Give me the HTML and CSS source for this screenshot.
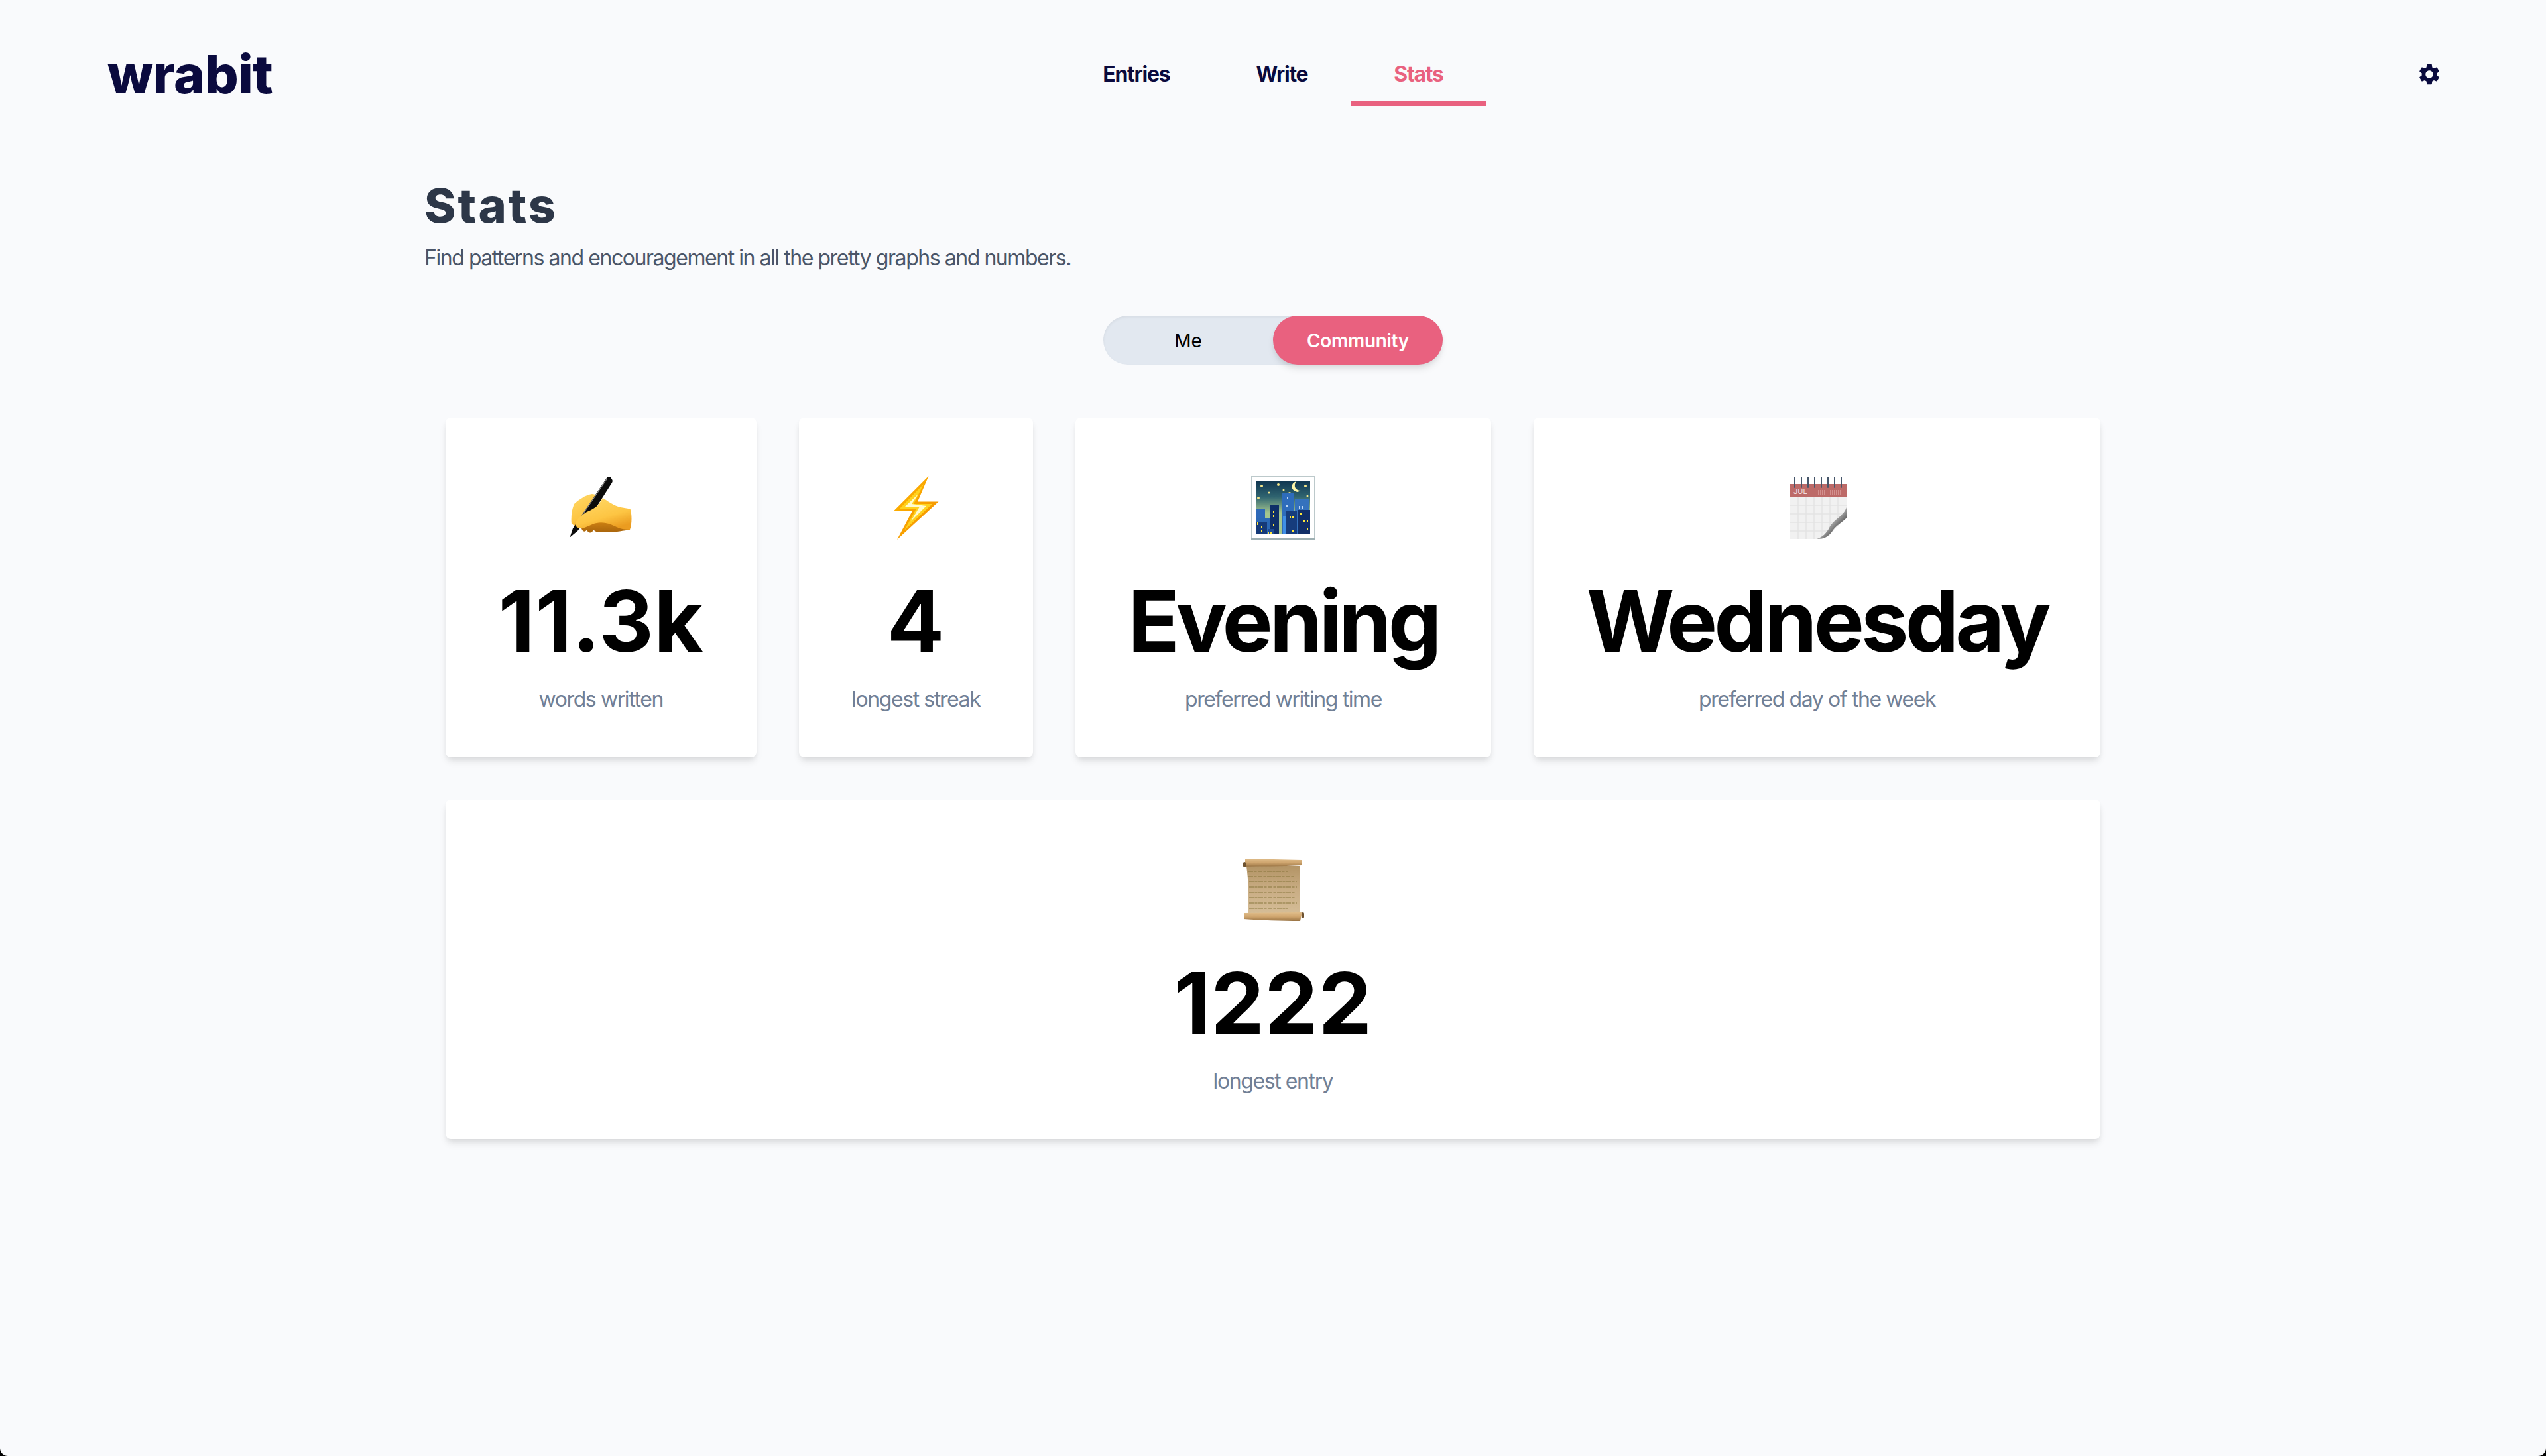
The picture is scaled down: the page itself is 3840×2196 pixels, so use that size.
FILE: index.html
```html
<!DOCTYPE html>
<html lang="en">
<head>
    <meta charset="UTF-8">
    <meta name="viewport" content="width=device-width, initial-scale=1.0">
    <title>Stats - wrabit</title>
    <link rel="stylesheet" href="styles.css">
</head>
<body>
    <div class="header">
        <a class="logo">wrabit</a>
        <div class="tabs">
            <a class="tab">Entries</a>
            <a class="tab">Write</a>
            <a class="tab tab-active">Stats</a>
        </div>
        <svg class="gear" viewBox="0 0 24 24">
            <path d="M19.14,12.94c0.04-0.3,0.06-0.61,0.06-0.94c0-0.32-0.02-0.64-0.07-0.94l2.03-1.58c0.18-0.14,0.23-0.41,0.12-0.61l-1.92-3.32c-0.12-0.22-0.37-0.29-0.59-0.22l-2.39,0.96c-0.5-0.38-1.03-0.7-1.62-0.94L14.4,2.81c-0.04-0.24-0.24-0.41-0.48-0.41h-3.84c-0.24,0-0.43,0.17-0.47,0.41L9.25,5.35C8.66,5.59,8.12,5.92,7.63,6.29L5.24,5.33c-0.22-0.08-0.47,0-0.59,0.22L2.74,8.87C2.62,9.08,2.66,9.34,2.86,9.48l2.03,1.58C4.84,11.36,4.8,11.69,4.8,12s0.02,0.64,0.07,0.94l-2.03,1.58c-0.18,0.14-0.23,0.41-0.12,0.61l1.92,3.32c0.12,0.22,0.37,0.29,0.59,0.22l2.39-0.96c0.5,0.38,1.03,0.7,1.62,0.94l0.36,2.54c0.05,0.24,0.24,0.41,0.48,0.41h3.84c0.24,0,0.44-0.17,0.47-0.41l0.36-2.54c0.59-0.24,1.13-0.56,1.62-0.94l2.39,0.96c0.22,0.08,0.47,0,0.59-0.22l1.92-3.32c0.12-0.22,0.07-0.47-0.12-0.61L19.14,12.94z M12,15.6c-1.98,0-3.6-1.62-3.6-3.6s1.62-3.6,3.6-3.6s3.6,1.62,3.6,3.6S13.98,15.6,12,15.6z"/>
        </svg>
    </div>

    <div class="main">
        <h1 class="title">Stats</h1>
        <p class="subtitle">Find patterns and encouragement in all the pretty graphs and numbers.</p>

        <div class="toggle">
            <button class="toggle-btn">Me</button>
            <button class="toggle-btn toggle-active">Community</button>
        </div>

        <div class="cards">
            <!-- words written -->
            <div class="card">
                <svg class="emoji" viewBox="0 0 96 96">
                    <defs>
                        <linearGradient id="skin" x1="0.1" y1="0" x2="0.6" y2="1">
                            <stop offset="0" stop-color="#ffd968"/>
                            <stop offset="0.65" stop-color="#fdc543"/>
                            <stop offset="1" stop-color="#eb9c20"/>
                        </linearGradient>
                        <linearGradient id="under" x1="0" y1="0" x2="0" y2="1">
                            <stop offset="0" stop-color="#d98a14"/>
                            <stop offset="1" stop-color="#a8640c"/>
                        </linearGradient>
                    </defs>
                    <!-- fingers under the palm -->
                    <path d="M18 74 C19 84 24 86 27 81 C29 87 35 87 37 81 C41 86 47 85 51 84 C64 86 80 83 92 81 L88 68 L30 64 Z" fill="url(#under)"/>
                    <!-- back of the hand -->
                    <path d="M8 42 C14 36 26 28 35 27 C38 27 44 30 50 33 L30 62 L10 76 L4 72 C3 64 4 50 8 42 Z" fill="url(#skin)"/>
                    <!-- pen -->
                    <path d="M57 3 C59 1 61 1 63 2 L65 5 C66 7 66 8 65 10 L42 46 L13 83 L1.500 92.500 L6 79 Z" fill="#0b0b0b"/>
                    <path d="M57.500 4 L20 59" stroke="#8f8f8f" stroke-width="1.200"/>
                    <!-- thumb and palm over the pen -->
                    <path d="M10 74 C9 67 19 59 27 54 C36 50 42 47 46 41 L51 33 C58 37 68 45 78 47 L92.500 49.500 C95 56 95.500 72 92 81 C86 81 78 80 72 77 C62 72 52 69 42 71 C34 72 24 80 16 79 C13 78 11 77 10 74 Z" fill="url(#skin)"/>
                </svg>
                <div class="number number-digits">11.3k</div>
                <div class="label">words written</div>
            </div>

            <!-- longest streak -->
            <div class="card">
                <svg class="emoji" viewBox="0 0 96 96">
                    <defs>
                        <linearGradient id="bolt" x1="0" y1="0" x2="1" y2="1">
                            <stop offset="0" stop-color="#ffb800"/>
                            <stop offset="1" stop-color="#f28c00"/>
                        </linearGradient>
                    </defs>
                    <path d="M67.500 0 L15 52.500 L43 52.500 L20 96 L82.500 38.500 L51 38.500 Z" fill="url(#bolt)"/>
                    <path d="M60 12 L24 49 L49 49 L31 82 L73 42 L45 42 Z" fill="#ffd21f"/>
                    <path d="M52 27 L32 46 L54 46 L41 68 L64 45 L42 42 Z" fill="#fffbd0"/>
                </svg>
                <div class="number number-digits">4</div>
                <div class="label">longest streak</div>
            </div>

            <!-- preferred writing time -->
            <div class="card">
                <svg class="emoji" viewBox="0 0 96 96">
                    <defs>
                        <linearGradient id="sky" x1="0" y1="0" x2="0" y2="1">
                            <stop offset="0" stop-color="#0f3550"/>
                            <stop offset="0.3" stop-color="#2f6470"/>
                            <stop offset="0.6" stop-color="#a4c68f"/>
                        </linearGradient>
                    </defs>
                    <rect x="0.500" y="0.500" width="95" height="95" fill="#fff" stroke="#bcc9cb"/>
                    <rect x="0" y="94" width="96" height="2" fill="#9fb0b3"/>
                    <rect x="8" y="7" width="81" height="81" fill="url(#sky)"/>
                    <path d="M68 8 C59 11 59 22 70 24 L75 22 C67 22 63 15 68 8 Z" fill="#fff6a8"/>
                    <g fill="#f3e58a">
                        <circle cx="16" cy="15" r="2"/>
                        <circle cx="41" cy="13" r="2"/>
                        <circle cx="82" cy="15" r="2"/>
                        <circle cx="27" cy="25" r="1.500"/>
                        <circle cx="49" cy="21" r="1.500"/>
                        <circle cx="58" cy="26" r="2"/>
                        <circle cx="85" cy="30" r="1.500"/>
                        <circle cx="11" cy="33" r="2"/>
                    </g>
                    <rect x="8" y="49" width="13" height="39" fill="#2d69b8"/>
                    <rect x="46" y="26" width="18" height="62" fill="#2e6cbb"/>
                    <rect x="66" y="35" width="21" height="53" fill="#3572bd"/>
                    <rect x="8" y="63" width="26" height="25" fill="#2b68b4"/>
                    <rect x="48" y="60" width="4" height="28" fill="#3f8fe6"/>
                    <rect x="8" y="70" width="16" height="18" fill="#153a78"/>
                    <rect x="29" y="43" width="13" height="45" fill="#0f2f68"/>
                    <rect x="53" y="53" width="16" height="35" fill="#163c7c"/>
                    <rect x="70" y="51" width="19" height="37" fill="#122f68"/>
                    <rect x="26" y="80" width="8" height="8" fill="#1d4c96"/>
                    <g fill="#ffe83a">
                        <rect x="9" y="70" width="2" height="4"/>
                        <rect x="15" y="76" width="2" height="3"/>
                        <rect x="15" y="82" width="2" height="3"/>
                        <rect x="33" y="52" width="2" height="3"/>
                        <rect x="33" y="59" width="2" height="3"/>
                        <rect x="33" y="72" width="2" height="3"/>
                        <rect x="25" y="84" width="2" height="3"/>
                        <rect x="29" y="84" width="2" height="3"/>
                        <rect x="58" y="60" width="2" height="4"/>
                        <rect x="62" y="60" width="2" height="4"/>
                        <rect x="62" y="81" width="2" height="4"/>
                        <rect x="74" y="55" width="2" height="3"/>
                        <rect x="79" y="66" width="2" height="3"/>
                        <rect x="84" y="66" width="2" height="3"/>
                        <rect x="84" y="78" width="2" height="3"/>
                    </g>
                    <g fill="#bcd6f5">
                        <rect x="54" y="31" width="2" height="4"/>
                        <rect x="53" y="43" width="2" height="3"/>
                        <rect x="72" y="45" width="2" height="4"/>
                        <rect x="77" y="45" width="2" height="4"/>
                    </g>
                </svg>
                <div class="number">Evening</div>
                <div class="label">preferred writing time</div>
            </div>

            <!-- preferred day -->
            <div class="card">
                <svg class="emoji" viewBox="0 0 96 96">
                    <defs>
                        <linearGradient id="curl" x1="0.2" y1="0.2" x2="0.8" y2="0.8">
                            <stop offset="0" stop-color="#f4f4f4"/>
                            <stop offset="0.5" stop-color="#a8a8a8"/>
                            <stop offset="1" stop-color="#333"/>
                        </linearGradient>
                    </defs>
                    <rect x="7" y="32" width="85" height="63" fill="#f1f1f1"/>
                    <g fill="none" stroke="#e4e4e4" stroke-width="1.500">
                        <path d="M19 32 V95 M31 32 V95 M43 32 V95 M55 32 V95 M67 32 V95 M79 32 V95"/>
                        <path d="M7 44 H92 M7 57 H92 M7 70 H92 M7 83 H92"/>
                    </g>
                    <rect x="7" y="12" width="85" height="20" fill="#bd6a68"/>
                    <text class="cal-month" x="12" y="27">JUL</text>
                    <path d="M50 21 V28 M53 21 V28 M56 21 V28 M59 21 V28 M68 21 V28 M71 21 V28 M74 21 V28 M77 21 V28 M80 21 V28 M83 21 V28" stroke="#da9d9b" stroke-width="1.500"/>
                    <g fill="none" stroke="#46566a" stroke-width="2" stroke-linecap="round">
                        <path d="M14 2 V17 M24 2 V17 M34 2 V17 M44 2 V17 M54 2 V17 M64 2 V17 M74 2 V17 M84 2 V17"/>
                    </g>
                    <path d="M93 63 C84 70 72 82 66 90 C60 94 54 95 47 96 L93 96 Z" fill="#fff"/>
                    <path d="M92 47 C88 60 72 66 66 78 C62 86 56 92 47 95 C58 95 64 92 70 84 C76 74 86 70 92 63 Z" fill="url(#curl)"/>
                </svg>
                <div class="number">Wednesday</div>
                <div class="label">preferred day of the week</div>
            </div>

            <!-- longest entry -->
            <div class="card">
                <svg class="emoji" viewBox="0 0 96 96">
                    <defs>
                        <linearGradient id="paper" x1="0" y1="0" x2="0" y2="1">
                            <stop offset="0" stop-color="#b39465"/>
                            <stop offset="0.5" stop-color="#c9ad84"/>
                            <stop offset="1" stop-color="#d5bd97"/>
                        </linearGradient>
                        <linearGradient id="roller" x1="0" y1="0" x2="0" y2="1">
                            <stop offset="0" stop-color="#e0bd8a"/>
                            <stop offset="0.5" stop-color="#cfa56e"/>
                            <stop offset="1" stop-color="#9a7444"/>
                        </linearGradient>
                    </defs>
                    <path d="M8 12 L89 12 C87 35 89 60 88 84 L10 84 C12 60 11 35 8 12 Z" fill="url(#paper)"/>
                    <g class="scroll-lines" fill="none" stroke="#7d6e30" stroke-width="1.600" stroke-dasharray="7 1.500 4 1.500">
                        <path d="M11 20 H70"/>
                        <path d="M11 28 H80"/>
                        <path d="M12 36 H84"/>
                        <path d="M12 44 H84"/>
                        <path d="M12 52 H82"/>
                        <path d="M12 60 H82"/>
                        <path d="M12 68 H84"/>
                        <path d="M12 76 H70"/>
                    </g>
                    <path d="M6 1 L91 3 L91 11 C60 13 30 12 6 13 Z" fill="url(#roller)"/>
                    <rect x="3" y="6" width="4" height="8" rx="2" fill="#6d5230"/>
                    <path d="M4 83 L92 82 L89 95 C60 95 30 94 4 92 Z" fill="url(#roller)"/>
                    <rect x="91" y="82" width="4" height="9" rx="2" fill="#6d5230"/>
                </svg>
                <div class="number number-digits">1222</div>
                <div class="label">longest entry</div>
            </div>
        </div>
    </div>
</body>
</html>
```

FILE: styles.css
```css
* {
    box-sizing: border-box;
}

html {
    background-color: #000;
}

body {
    font-family: 'Inter', 'Liberation Sans', sans-serif;
    background-color: #f9fafc;
    margin: 0;
    height: 2196px;
    overflow: hidden;
    border-radius: 0 0 12px 12px;
    color: #000;
}

.header {
    display: grid;
    grid-template-columns: 1fr auto 1fr;
    align-items: center;
    height: 224px;
    padding: 0 160px;
}

.logo {
    margin-left: 2px;
    font-size: 80px;
    font-weight: 800;
    color: #0a0a3e;
    line-height: 96px;
    letter-spacing: -0.5px;
}

.tabs {
    display: flex;
}

.tab {
    padding: 0 65px;
    height: 96px;
    line-height: 96px;
    font-size: 32px;
    font-weight: 700;
    letter-spacing: -1.3px;
    color: #0a0a3e;
}

.tab-active {
    color: #e9617f;
    border-bottom: 8px solid #e9617f;
}

.gear {
    justify-self: end;
    width: 38px;
    height: 38px;
    margin-right: -3px;
    fill: #0a0a3e;
}

.main {
    width: 2560px;
    margin: 0 auto;
    padding-top: 46px;
}

.title {
    margin: 0;
    font-size: 72px;
    line-height: 80px;
    font-weight: 800;
    letter-spacing: 3px;
    color: #2d3748;
}

.subtitle {
    margin: 15px 0 0;
    font-size: 32px;
    line-height: 48px;
    letter-spacing: -1.45px;
    color: #4a5568;
}

.toggle {
    display: flex;
    width: 512px;
    height: 74px;
    margin: 63px auto 0;
    background-color: #e2e8f0;
    border-radius: 37px;
    box-shadow: inset 0 2px 4px rgba(0, 0, 0, 0.06);
}

.toggle-btn {
    flex: 1;
    padding-top: 2px;
    border: none;
    background: none;
    border-radius: 37px;
    font-family: inherit;
    font-size: 28px;
    font-weight: 400;
    color: #000;
}

.toggle-active {
    background-color: #e9617f;
    color: #fff;
    font-weight: 600;
    letter-spacing: -0.3px;
    box-shadow: 0 8px 12px -2px rgba(0, 0, 0, 0.1), 0 4px 8px -2px rgba(0, 0, 0, 0.06);
}

.cards {
    display: flex;
    flex-wrap: wrap;
    gap: 64px;
    padding: 0 32px;
    margin-top: 80px;
}

.card {
    flex-grow: 1;
    padding: 88px 76px 63px;
    background-color: #fff;
    border-radius: 8px;
    box-shadow: 0 8px 12px -2px rgba(0, 0, 0, 0.1), 0 4px 8px -2px rgba(0, 0, 0, 0.06);
    text-align: center;
}

.emoji {
    display: block;
    width: 96px;
    height: 96px;
    margin: 0 auto;
}

.number {
    margin-top: 43px;
    font-size: 128px;
    line-height: 160px;
    font-weight: 700;
    letter-spacing: -5px;
    white-space: nowrap;
}

.number-digits {
    letter-spacing: 0.5px;
}

.label {
    margin-top: 14px;
    font-size: 32px;
    line-height: 48px;
    letter-spacing: -1.4px;
    color: #718096;
}

.cal-month {
    font-size: 11px;
    fill: #f3dcdb;
}

.scroll-lines {
    opacity: 0.55;
}
```
